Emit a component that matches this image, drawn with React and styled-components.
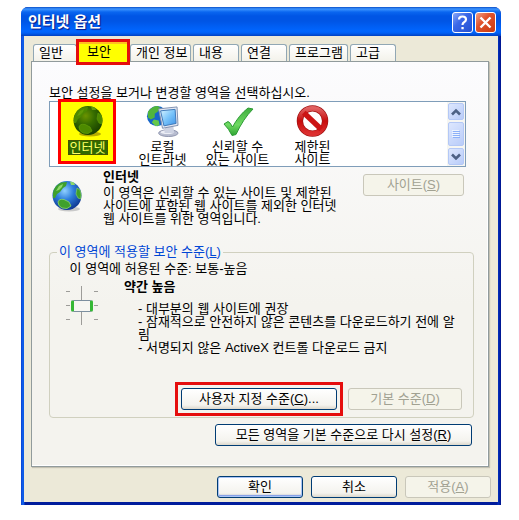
import React, { useState } from "react";
import styled, { createGlobalStyle, css } from "styled-components";

const GlobalStyle = createGlobalStyle`
  *, *::before, *::after { box-sizing: border-box; }
  body {
    margin: 0;
    background: #fff;
    color: #000;
    font: 13px/14px "Liberation Sans", "Noto Sans CJK KR", sans-serif;
  }
  button { font: inherit; color: inherit; margin: 0; padding: 0; white-space: nowrap; }
`;

const Page = styled.main`
  padding: 7px 18px 16px 21px;
`;

const Window = styled.section`
  display: flex;
  flex-direction: column;
  border-radius: 7px 7px 0 0;
  overflow: hidden;
  background: linear-gradient(90deg, #0a3fd0 0, #1166f0 2px, #0a50e0 3px, #001c9c 4px, #001c9c calc(100% - 4px), #0030c0 calc(100% - 3px), #00138c 100%);
`;

const TitleBar = styled.header`
  display: flex;
  align-items: center;
  gap: 2px;
  height: 29px;
  padding: 1px 5px 0 7px;
  background: linear-gradient(#0a50c8 0, #3d95ff 2px, #0a66f0 5px, #0055e5 9px, #0055e5 14px, #0066ff 24px, #0060f5 26px, #0040c0 29px);
`;

const Title = styled.h1`
  flex: 1;
  margin: 0;
  color: #fff;
  font-size: 15px;
  line-height: 20px;
  font-weight: 700;
  text-shadow: 1px 1px 1px #0a1883;
`;

const CaptionButton = styled.button`
  display: grid;
  place-items: center;
  width: 21px;
  height: 21px;
  border: 1px solid #fff;
  border-radius: 3px;
  background: ${(p) =>
    p.$close
      ? "linear-gradient(135deg, #f0a088, #e0532c 40%, #c83a10)"
      : "linear-gradient(135deg, #8aa8f8, #3a68e8 40%, #2450d0)"};
`;

const Client = styled.div`
  margin: 0 3px 3px;
  padding: 8px 7px 4px;
  background: #ece9d8;
`;

const Tabs = styled.div`
  display: flex;
  height: 17px;
  padding-left: 2px;
`;

const Tab = styled.button`
  position: relative;
  width: ${(p) => p.$width}px;
  margin-right: 2px;
  padding-left: 5px;
  text-align: left;
  line-height: 16px;
  border: 1px solid #91a7b4;
  border-bottom: 0;
  border-radius: 3px 3px 0 0;
  background: linear-gradient(#fff, #f3f2ea);
  ${(p) =>
    p.$marked &&
    css`
      z-index: 1;
      background: transparent;
      border-color: transparent;
    `}
`;

const TabMark = styled.span`
  position: absolute;
  inset: -6px -3px -4px -4px;
  display: flex;
  align-items: center;
  padding-left: 8px;
  border: 3px solid #e50d0d;
  background: linear-gradient(#ffbf20 0, #ffbf20 2px, #ff0 2px);
`;

const Panel = styled.div`
  margin-right: 2px;
  padding: 24px 14px 20px 17px;
  border: 1px solid #919b9c;
  background: linear-gradient(#fcfcfe, #f4f3ee 60%, #f4f3ee);
  box-shadow: 1px 1px 1px #c4c1b2, inset -1px -1px #fff;
`;

const Prompt = styled.p`
  margin: 0 0 1px;
`;

const ZoneList = styled.div`
  display: flex;
  height: 66px;
  margin-right: 8px;
  border: 1px solid #7f9db9;
  background: #fff;
`;

const Zones = styled.div`
  flex: 1;
  display: flex;
`;

const Zone = styled.button`
  position: relative;
  display: flex;
  flex-direction: column;
  align-items: center;
  gap: 3px;
  width: 75px;
  padding-top: 3px;
  border: 0;
  background: none;
  line-height: 13px;
  svg { position: relative; flex: none; }
`;

const ZoneMark = styled.span`
  position: absolute;
  inset: -3px 9px 2px 8px;
  border: 3px solid #f00;
  background: #ff0;
`;

const ZoneLabel = styled.span`
  position: relative;
  ${(p) =>
    p.$selected &&
    css`
      width: 40px;
      line-height: 15px;
      color: #ff6;
      background: #316a00;
      outline: 1px dotted #554400;
      outline-offset: -1px;
    `}
`;

const ScrollBar = styled.div`
  display: flex;
  flex-direction: column;
  gap: 2px;
  width: 18px;
  padding: 1px;
  background: #f6f6f2;
`;

const ScrollButton = styled.button`
  display: grid;
  place-items: center;
  height: 17px;
  border: 1px solid #b4c8f6;
  border-radius: 2px;
  background: linear-gradient(135deg, #dde7fe, #b9ccf9);
`;

const ScrollThumb = styled(ScrollButton)`
  flex: 1;
  height: auto;
`;

const ZoneInfo = styled.div`
  display: grid;
  grid-template-columns: 54px 1fr auto;
  padding: 3px 10px 0 0;
  height: 78px;
`;

const InfoIcon = styled.div`
  padding: 10px 0 0 2px;
`;

const Strong = styled.h2`
  margin: 0 0 2px;
  font-size: 13px;
  line-height: 14px;
`;

const Text = styled.p`
  margin: 0;
  line-height: 13px;
  white-space: nowrap;
`;

const PushButton = styled.button`
  height: 22px;
  width: ${(p) => p.$width}px;
  border: 1px solid #003c74;
  border-radius: 3px;
  background: linear-gradient(#fff, #f4f3ee 80%, #dcd8cc);
  ${(p) =>
    p.$primary &&
    css`
      box-shadow: inset 0 0 0 1px #a9c4f5, inset 0 -2px 1px #7d9be8;
    `}
  &:disabled {
    border-color: #c9c7ba;
    background: #f5f4ea;
    color: #a1a192;
  }
`;

const SitesCell = styled.div`
  padding-top: 4px;
`;

const Group = styled.fieldset`
  min-width: 0;
  margin: 0 0 6px;
  padding: 3px 11px 1px 16px;
  border: 1px solid #d0d0bf;
  border-radius: 4px;
`;

const Legend = styled.legend`
  margin-left: -9px;
  padding: 0 2px;
  color: #0046d5;
`;

const LevelRow = styled.div`
  display: grid;
  grid-template-columns: 58px 1fr;
  padding-top: 4px;
`;

const Level = styled.div`
  display: grid;
  width: 32px;
  height: 39px;
  margin-top: 6px;
  > * { grid-area: 1 / 1; }
`;

const Slider = styled.input`
  appearance: none;
  writing-mode: vertical-lr;
  width: 24px;
  height: 39px;
  margin: 0 4px;
  background: transparent;
  &::-webkit-slider-thumb {
    appearance: none;
    width: 22px;
    height: 12px;
    border: 1px solid #7c8f9f;
    border-left: 3px solid #35b835;
    border-right: 3px solid #35b835;
    border-radius: 2px;
    background: #f6f6f2;
  }
`;

const Details = styled.div`
  padding: 6px 0 0 14px;
`;

const Actions = styled.div`
  display: flex;
  justify-content: flex-end;
  align-items: center;
  gap: 5px;
  padding-top: 28px;
`;

const Highlight = styled.div`
  padding: 3px;
  border: 3px solid #e50d0d;
  line-height: 0;
  button { line-height: 14px; }
`;

const ResetRow = styled.div`
  display: flex;
  justify-content: flex-end;
  padding-right: 2px;
`;

const Footer = styled.footer`
  display: flex;
  justify-content: flex-end;
  gap: 8px;
  padding-top: 9px;
`;

function Globe({ dim }) {
  const id = dim ? "globeDim" : "globe";
  const land = dim ? "#4d8a00" : "#3fa02c";
  const light = dim ? "#609c08" : "#8ed86a";
  return (
    <svg width="32" height="32" viewBox="0 0 32 32" aria-hidden="true">
      <defs>
        <radialGradient id={id} cx="42%" cy="34%" r="68%">
          <stop offset="0" stopColor={dim ? "#6b9400" : "#8fd0ff"} />
          <stop offset=".45" stopColor={dim ? "#356c00" : "#2f7fdc"} />
          <stop offset="1" stopColor={dim ? "#184000" : "#0d3590"} />
        </radialGradient>
      </defs>
      <ellipse cx="18" cy="29" rx="11" ry="2.5" fill={dim ? "#b7ae00" : "#c9c9c9"} />
      <circle cx="16" cy="15.5" r="14.5" fill={`url(#${id})`} />
      <path d="M2 13Q3 6 10 2.500L16 2 15 6 12 8 9 12 6 14 4 18 2 18Z" fill={land} />
      <path d="M19 1.500L23 2.500 24 5 20 5Z" fill={light} />
      <path d="M26 8L29 10Q31 15 29.500 19L27 18 25 14Z" fill={land} stroke={light} strokeWidth=".6" />
      <path d="M7 22Q8 18.500 13 19.500L18 22 20 26 16 28.500 11 28Q7 26 7 22Z" fill={land} stroke={light} strokeWidth=".8" />
      <path d="M5 11L8 6 12 4 11 7 8 10Z" fill={light} />
    </svg>
  );
}

function Intranet() {
  return (
    <svg width="33" height="32" viewBox="0 0 34 33" aria-hidden="true">
      <defs>
        <linearGradient id="screen" x1="0" y1="0" x2="1" y2="1">
          <stop offset="0" stopColor="#d8f4ff" />
          <stop offset=".5" stopColor="#79c4fa" />
          <stop offset="1" stopColor="#3d92e8" />
        </linearGradient>
      </defs>
      <circle cx="11.500" cy="11.500" r="10.500" fill="#1766c9" />
      <path d="M2 7Q6 1 12 1L15 3 12 7 9 9 9 13 5 15 2 13Z" fill="#51b53b" />
      <path d="M8 15L13 16 14 21 10 22 6 18Z" fill="#65c84b" />
      <ellipse cx="23" cy="29" rx="10" ry="3.500" fill="#b8bdd0" stroke="#8d94ad" />
      <ellipse cx="22" cy="28" rx="7" ry="2" fill="#eceef6" />
      <path d="M20 20H28L29 29H19Z" fill="#cdd2e2" />
      <path d="M13 4L32 2 33 21 17 24Z" fill="#e4e8f3" stroke="#7f8fae" />
      <path d="M15 6L30 4.500 31 19 18.500 21.500Z" fill="url(#screen)" stroke="#3e78b8" />
    </svg>
  );
}

function Check() {
  return (
    <svg width="32" height="32" viewBox="0 0 32 32" aria-hidden="true">
      <defs>
        <linearGradient id="check" x1="0" y1="0" x2="0" y2="1">
          <stop offset="0" stopColor="#3fae3f" />
          <stop offset=".6" stopColor="#6fda62" />
          <stop offset="1" stopColor="#2fa533" />
        </linearGradient>
      </defs>
      <path d="M2 19L6 16.500Q8 17 10.500 22 17 10 26 3L31 4Q21 14 14 29.500L10 30.500Q7 24 2 19Z" fill="url(#check)" stroke="#2d9a36" />
    </svg>
  );
}

function Restricted() {
  return (
    <svg width="33" height="32" viewBox="0 0 34 33" aria-hidden="true">
      <defs>
        <linearGradient id="stop" x1="0" y1="0" x2="0" y2="1">
          <stop offset="0" stopColor="#e06060" />
          <stop offset=".5" stopColor="#c80c0c" />
          <stop offset="1" stopColor="#dc3030" />
        </linearGradient>
      </defs>
      <circle cx="17" cy="16.500" r="13" fill="#fff" stroke="#a01414" strokeWidth="6.500" />
      <circle cx="17" cy="16.500" r="13" fill="none" stroke="url(#stop)" strokeWidth="5" />
      <path d="M8 8L26 25" stroke="#cc1414" strokeWidth="5.500" />
    </svg>
  );
}

function Chevron({ up }) {
  return (
    <svg width="10" height="8" viewBox="0 0 10 8" aria-hidden="true">
      <path d={up ? "M1 6.500L5 2.500 9 6.500" : "M1 1.500L5 5.500 9 1.500"} fill="none" stroke="#4d6185" strokeWidth="2.600" />
    </svg>
  );
}

const TABS = [
  ["일반", 44],
  ["보안", 49],
  ["개인 정보", 61],
  ["내용", 46],
  ["연결", 46],
  ["프로그램", 59],
  ["고급", 46],
];

export default function App() {
  const [level, setLevel] = useState(1);
  return (
    <Page>
      <GlobalStyle />
      <Window aria-label="인터넷 옵션">
        <TitleBar>
          <Title>인터넷 옵션</Title>
          <CaptionButton aria-label="도움말">
            <svg width="15" height="17" viewBox="0 0 15 17" aria-hidden="true">
              <path d="M4 5.500Q4 2.500 7.500 2.500T11 5.500Q11 7 9 8.200 7.500 9 7.500 11" fill="none" stroke="#fff" strokeWidth="2.200" />
              <path d="M6.400 13H8.700V15.300H6.400Z" fill="#fff" />
            </svg>
          </CaptionButton>
          <CaptionButton $close aria-label="닫기">
            <svg width="15" height="15" viewBox="0 0 15 15" aria-hidden="true">
              <path d="M2.500 2.500L12.500 12.500M12.500 2.500L2.500 12.500" stroke="#fff" strokeWidth="2.400" />
            </svg>
          </CaptionButton>
        </TitleBar>
        <Client>
          <Tabs role="tablist">
            {TABS.map(([name, width]) => (
              <Tab key={name} role="tab" aria-selected={name === "보안"} $width={width} $marked={name === "보안"}>
                {name === "보안" ? <TabMark>{name}</TabMark> : name}
              </Tab>
            ))}
          </Tabs>
          <Panel role="tabpanel">
            <Prompt>보안 설정을 보거나 변경할 영역을 선택하십시오.</Prompt>
            <ZoneList>
              <Zones role="listbox" aria-label="영역">
                <Zone role="option" aria-selected="true">
                  <ZoneMark />
                  <Globe dim />
                  <ZoneLabel $selected>인터넷</ZoneLabel>
                </Zone>
                <Zone role="option" aria-selected="false">
                  <Intranet />
                  <ZoneLabel>로컬<br />인트라넷</ZoneLabel>
                </Zone>
                <Zone role="option" aria-selected="false">
                  <Check />
                  <ZoneLabel>신뢰할 수<br />있는 사이트</ZoneLabel>
                </Zone>
                <Zone role="option" aria-selected="false">
                  <Restricted />
                  <ZoneLabel>제한된<br />사이트</ZoneLabel>
                </Zone>
              </Zones>
              <ScrollBar>
                <ScrollButton aria-label="위로"><Chevron up /></ScrollButton>
                <ScrollThumb aria-label="스크롤">
                  <svg width="8" height="8" viewBox="0 0 8 8" shapeRendering="crispEdges" aria-hidden="true">
                    <path d="M0 .5H7M0 2.500H7M0 4.500H7M0 6.500H7" stroke="#eef4fe" />
                    <path d="M1 1.500H8M1 3.500H8M1 5.500H8M1 7.500H8" stroke="#8cb0f8" />
                  </svg>
                </ScrollThumb>
                <ScrollButton aria-label="아래로"><Chevron /></ScrollButton>
              </ScrollBar>
            </ZoneList>
            <ZoneInfo>
              <InfoIcon><Globe /></InfoIcon>
              <div>
                <Strong>인터넷</Strong>
                <Text>
                  이 영역은 신뢰할 수 있는 사이트 및 제한된<br />
                  사이트에 포함된 웹 사이트를 제외한 인터넷<br />
                  웹 사이트를 위한 영역입니다.
                </Text>
              </div>
              <SitesCell>
                <PushButton disabled $width={101}>사이트(<u>S</u>)</PushButton>
              </SitesCell>
            </ZoneInfo>
            <Group>
              <Legend>이 영역에 적용할 보안 수준(<u>L</u>)</Legend>
              <Text as="label" htmlFor="level">&nbsp;이 영역에 허용된 수준: 보통-높음</Text>
              <LevelRow>
                <Level>
                  <svg width="32" height="39" viewBox="0 0 32 39" aria-hidden="true">
                    <path d="M15.500 0V39M0 5.500H4M28 5.500H32M0 19.500H4M28 19.500H32M0 33.500H4M28 33.500H32" stroke="#9d9c99" />
                  </svg>
                  <Slider id="level" type="range" min="0" max="2" value={level} onChange={(e) => setLevel(Number(e.target.value))} />
                </Level>
                <div>
                  <Strong>약간 높음</Strong>
                  <Details>
                    <Text>
                      - 대부분의 웹 사이트에 권장<br />
                      - 잠재적으로 안전하지 않은 콘텐츠를 다운로드하기 전에 알<br />
                      림<br />
                      - 서명되지 않은 ActiveX 컨트롤 다운로드 금지
                    </Text>
                  </Details>
                </div>
              </LevelRow>
              <Actions>
                <Highlight>
                  <PushButton $width={156}>사용자 지정 수준(<u>C</u>)...</PushButton>
                </Highlight>
                <PushButton disabled $width={114}>기본 수준(<u>D</u>)</PushButton>
              </Actions>
            </Group>
            <ResetRow>
              <PushButton $width={257}>모든 영역을 기본 수준으로 다시 설정(<u>R</u>)</PushButton>
            </ResetRow>
          </Panel>
          <Footer>
            <PushButton $primary $width={86}>확인</PushButton>
            <PushButton $width={86}>취소</PushButton>
            <PushButton disabled $width={86}>적용(<u>A</u>)</PushButton>
          </Footer>
        </Client>
      </Window>
    </Page>
  );
}
